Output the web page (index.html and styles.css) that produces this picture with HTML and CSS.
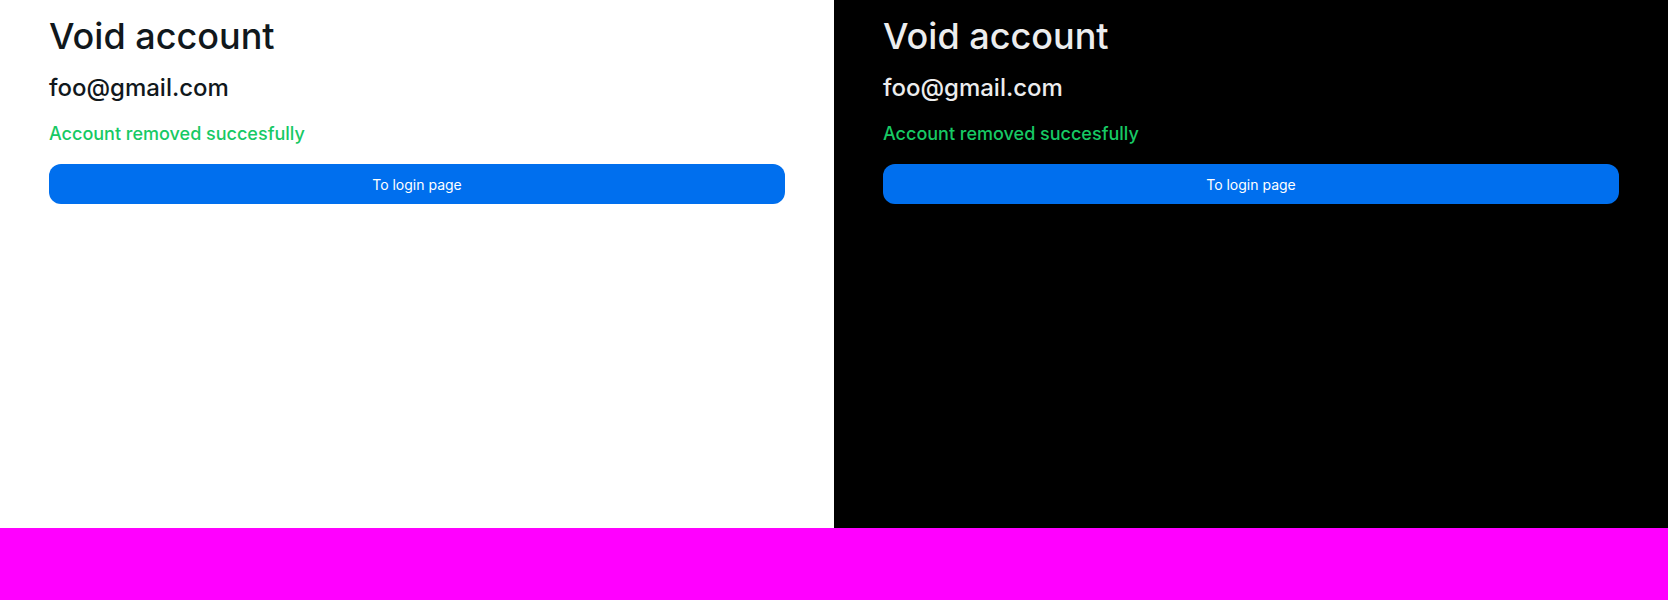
FILE: index.html
```html
<!DOCTYPE html>
<html lang="en">
<head>
<meta charset="utf-8">
<title>Void account</title>
<link rel="stylesheet" href="styles.css">
</head>
<body>
<div class="stage">
  <div class="panels">
    <section class="panel light">
      <h1 class="title">Void account</h1>
      <p class="email">foo@gmail.com</p>
      <p class="status">Account removed succesfully</p>
      <button class="btn" type="button">To login page</button>
    </section>
    <section class="panel dark">
      <h1 class="title">Void account</h1>
      <p class="email">foo@gmail.com</p>
      <p class="status">Account removed succesfully</p>
      <button class="btn" type="button">To login page</button>
    </section>
  </div>
  <div class="footer"></div>
</div>
</body>
</html>
```
FILE: styles.css
```css
* { box-sizing: border-box; }
html, body {
  margin: 0;
  padding: 0;
  background: #ff00ff;
  font-family: Inter, "Noto Sans", sans-serif;
}
.stage {
  display: flex;
  flex-direction: column;
  height: 600px;
}
.panels {
  display: grid;
  grid-template-columns: 834px 834px;
  height: 528px;
}
.footer {
  flex: 1;
  background: #ff00ff;
}
.panel {
  display: flex;
  flex-direction: column;
  align-items: stretch;
  gap: 16px;
  padding: 16px 49px 0 49px;
}
.light {
  background: #ffffff;
  color: #11181c;
  box-shadow: 0 2px 6px rgba(0,0,0,0.08);
}
.dark {
  background: #000000;
  color: #ecedee;
}
.title {
  margin: 0;
  font-size: 36px;
  line-height: 40px;
  font-weight: 500;
}
.email {
  margin: 0;
  font-size: 24px;
  line-height: 32px;
  font-weight: 500;
}
.status {
  margin: 0;
  font-size: 18px;
  line-height: 28px;
  font-weight: 500;
  color: #17c964;
}
.btn {
  height: 40px;
  border: 0;
  border-radius: 12px;
  background: #006fee;
  color: #ffffff;
  font-family: Inter, "Noto Sans", sans-serif;
  font-size: 14px;
  font-weight: 400;
  padding: 0 16px;
  cursor: pointer;
}
```
